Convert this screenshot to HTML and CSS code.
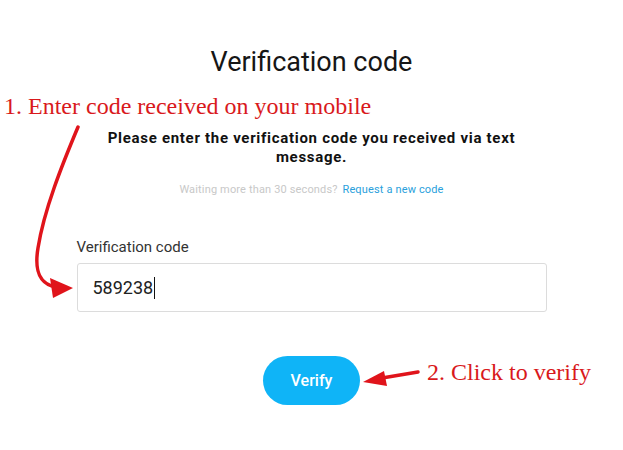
FILE: index.html
```html
<!DOCTYPE html>
<html lang="en">
<head>
    <meta charset="UTF-8">
    <meta name="viewport" content="width=device-width, initial-scale=1.0">
    <title>Verification code</title>
    <link rel="stylesheet" href="styles.css">
</head>
<body>
    <div class="page">
        <!-- 表单部分 -->
        <div class="verify">
            <h1 class="title">Verification code</h1>
            <p class="intro">Please enter the verification code you received via text message.</p>
            <p class="resend">Waiting more than 30 seconds? <a href="#">Request a new code</a></p>

            <label class="label" for="code">Verification code</label>
            <div class="field">
                <span class="value">589238</span><span class="caret"></span>
            </div>

            <div class="actions">
                <button class="btn">Verify</button>
            </div>
        </div>

        <!-- 标注部分 -->
        <div class="note note_one">1. Enter code received on your mobile</div>
        <div class="note note_two">2. Click to verify</div>
        <svg class="arrows" width="623" height="450" viewBox="0 0 623 450">
            <path d="M78 127 C 62 165, 44 210, 38 248 C 34 272, 40 284, 56 287" fill="none" stroke="#e0141b" stroke-width="3.5" stroke-linecap="round"/>
            <polygon points="73,288 50,278 53,298" fill="#e0141b"/>
            <path d="M418 372 L 382 378" fill="none" stroke="#e0141b" stroke-width="3.5" stroke-linecap="round"/>
            <polygon points="363,382 384,371 387,386" fill="#e0141b"/>
        </svg>
    </div>
</body>
</html>
```

FILE: styles.css
```css
*{
    margin: 0;
    padding: 0;
}
body{
    background: #fff;
    font-family: Roboto, "Liberation Sans", sans-serif;
    color: #111;
}
.page{
    position: relative;
    width: 623px;
    height: 450px;
    overflow: hidden;
}
.verify{
    width: 470px;
    margin: 0 auto;
    padding-top: 47px;
}
.title{
    font-size: 27px;
    line-height: 31px;
    font-weight: 400;
    text-align: center;
    color: #161616;
}
.intro{
    margin-top: 51px;
    font-size: 15px;
    line-height: 19px;
    font-weight: 700;
    letter-spacing: 0.7px;
    text-align: center;
}
.resend{
    margin-top: 16px;
    font-size: 11px;
    line-height: 14px;
    letter-spacing: 0.15px;
    text-align: center;
    color: #c8c8c8;
}
.resend a{
    margin-left: 2px;
    color: #2a9fdc;
    text-decoration: none;
}
.label{
    display: block;
    margin-top: 41px;
    margin-bottom: 7px;
    font-size: 15px;
    line-height: 18px;
    color: #333;
}
.field{
    display: flex;
    align-items: center;
    height: 49px;
    padding-left: 15px;
    border: 1px solid #dcdcdc;
    border-radius: 3px;
    box-sizing: border-box;
    font-size: 18px;
    color: #222;
}
.caret{
    width: 1px;
    height: 22px;
    margin-left: 1px;
    background: #111;
}
.actions{
    display: flex;
    justify-content: center;
    margin-top: 44px;
}
.btn{
    width: 97px;
    height: 49px;
    border: none;
    border-radius: 25px;
    background: #0fb4f7;
    color: #fff;
    font-family: Roboto, "Liberation Sans", sans-serif;
    font-size: 16px;
    font-weight: 500;
    cursor: pointer;
}
/* 标注 */
.note{
    position: absolute;
    font-family: "Liberation Serif", "Times New Roman", serif;
    font-size: 24px;
    line-height: 26px;
    color: #d9191c;
    white-space: nowrap;
}
.note_one{
    left: 4px;
    top: 93px;
}
.note_two{
    left: 427px;
    top: 359px;
}
.arrows{
    position: absolute;
    left: 0;
    top: 0;
    pointer-events: none;
}
```
